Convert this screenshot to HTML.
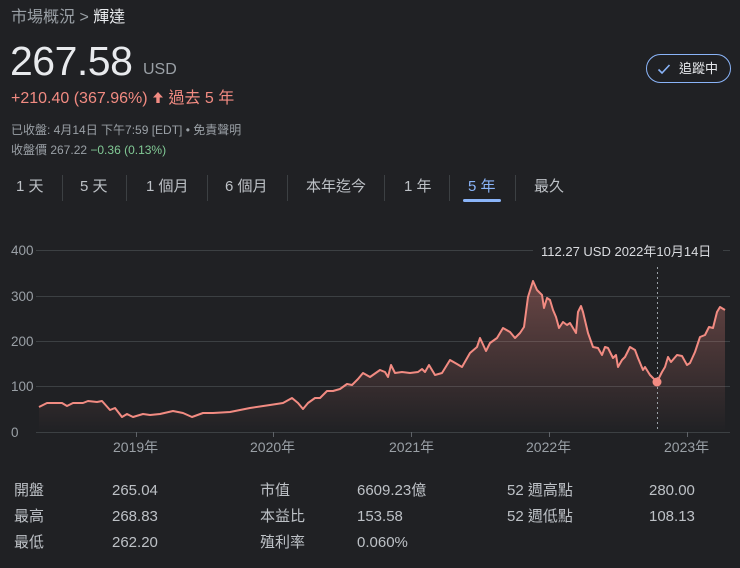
<!DOCTYPE html>
<html><head><meta charset="utf-8"><style>
body{margin:0;width:740px;height:568px;background:#202124;overflow:hidden;font-family:"Liberation Sans","Noto Sans CJK TC",sans-serif;color:#bdc1c6;position:relative}
.a{position:absolute;white-space:nowrap}
.tab{position:absolute;top:177px;font-size:15px;line-height:20px;color:#bdc1c6}
.sep{position:absolute;top:175px;width:1px;height:26px;background:#3c4043}
.k{position:absolute;font-size:15px;line-height:20px;color:#bdc1c6}
</style></head><body>
<div class="a" style="left:11px;top:7px;font-size:16px;line-height:22px;color:#9aa0a6">市場概況 &gt; <span style="color:#e8eaed">輝達</span></div>
<div class="a" style="left:10px;top:38px;font-size:41px;line-height:46px;color:#e8eaed;letter-spacing:-0.5px">267.58</div>
<div class="a" style="left:143px;top:60px;font-size:16px;line-height:20px;color:#9aa0a6">USD</div>
<div class="a" style="left:11px;top:89px;font-size:16px;line-height:20px;color:#f28b82">+210.40 (367.96%) <svg width="12" height="13" viewBox="0 0 12 13" style="vertical-align:-1px"><path d="M6 1L1 6.5H4.3V12H7.7V6.5H11Z" fill="#f28b82"/></svg> 過去 5 年</div>
<div class="a" style="left:11px;top:122px;font-size:12px;line-height:16px;color:#9aa0a6">已收盤: 4月14日 下午7:59 [EDT] • 免責聲明</div>
<div class="a" style="left:11px;top:142px;font-size:12px;line-height:16px;color:#9aa0a6">收盤價 267.22 <span style="color:#81c995">−0.36 (0.13%)</span></div>
<div class="a" style="left:646px;top:54px;width:85px;height:29px;border:1px solid #8ab4f8;border-radius:15px;box-sizing:border-box">
<svg style="position:absolute;left:10px;top:8px" width="14" height="12" viewBox="0 0 14 12"><path d="M1.5 6.5L5 10L12.5 2" fill="none" stroke="#8ab4f8" stroke-width="1.6"/></svg>
<span style="position:absolute;left:32px;top:5px;font-size:13px;line-height:17px;color:#e8eaed">追蹤中</span></div>
<div class="tab" style="left:16px">1 天</div><div class="sep" style="left:62px"></div>
<div class="tab" style="left:80px">5 天</div><div class="sep" style="left:126px"></div>
<div class="tab" style="left:146px">1 個月</div><div class="sep" style="left:207px"></div>
<div class="tab" style="left:225px">6 個月</div><div class="sep" style="left:287px"></div>
<div class="tab" style="left:306px">本年迄今</div><div class="sep" style="left:384px"></div>
<div class="tab" style="left:404px">1 年</div><div class="sep" style="left:449px"></div>
<div class="tab" style="left:468px;color:#8ab4f8">5 年</div>
<div class="a" style="left:463px;top:199px;width:38px;height:3px;background:#8ab4f8;border-radius:2px"></div>
<div class="sep" style="left:515px"></div>
<div class="tab" style="left:534px">最久</div>
<svg class="a" style="left:0;top:230px" width="740" height="240" viewBox="0 230 740 240">
<defs><linearGradient id="g" x1="0" y1="280" x2="0" y2="432" gradientUnits="userSpaceOnUse"><stop offset="0" stop-color="#f28b82" stop-opacity="0.35"/><stop offset="1" stop-color="#f28b82" stop-opacity="0"/></linearGradient></defs>
<g stroke="#3c4043" stroke-width="1"><line x1="36" y1="250.5" x2="730" y2="250.5"/><line x1="36" y1="296.5" x2="730" y2="296.5"/><line x1="36" y1="341.5" x2="730" y2="341.5"/><line x1="36" y1="386.5" x2="730" y2="386.5"/><line x1="36" y1="432.5" x2="730" y2="432.5"/></g>
<g fill="#9aa0a6" font-size="13.5"><text x="11" y="255">400</text><text x="11" y="301">300</text><text x="11" y="346">200</text><text x="11" y="391">100</text><text x="11" y="437">0</text></g>
<g fill="#9aa0a6" font-size="14"><text x="113" y="452">2019年</text><text x="250" y="452">2020年</text><text x="389" y="452">2021年</text><text x="526" y="452">2022年</text><text x="664" y="452">2023年</text></g>
<g stroke="#5f6368"><line x1="136.5" y1="432" x2="136.5" y2="437"/><line x1="273.5" y1="432" x2="273.5" y2="437"/><line x1="411.5" y1="432" x2="411.5" y2="437"/><line x1="549.5" y1="432" x2="549.5" y2="437"/><line x1="687.5" y1="432" x2="687.5" y2="437"/></g>
<path d="M39 407L47 403L55 403L62 403L67 406L73 403L83 403L88 401L97 402L102 401L110 410L115 408L122 417L127 414L133 417L143 414L150 415L160 414L173 411L183 413L192 417L203 413L213 413L230 412L250 408L270 405L283 403L292 398L298 403L303 409L308 403L315 398L320 398L327 391L333 391L340 389L347 384L352 385L358 379L363 373L370 377L380 370L385 372L388 377L391 365L395 373L402 372L410 373L418 372L422 369L425 372L429 365L435 375L442 373L450 360L457 364L462 367L470 353L477 347L480 338L486 351L490 343L497 338L503 328L510 332L515 338L520 333L524 327L528 297L533 281L537 290L542 295L544 308L547 298L550 300L553 310L556 317L559 328L563 322L567 325L570 323L576 333L578 312L581 306L583 312L588 333L593 347L598 348L602 355L605 347L608 348L613 358L616 355L618 367L622 360L625 357L630 347L635 350L638 358L643 370L645 367L650 375L657 382L662 372L665 367L668 357L671 362L677 355L682 356L687 365L690 363L695 352L700 337L705 335L709 327L713 328L717 312L720 307L725 310L725 432L39 432Z" fill="url(#g)"/>
<path d="M39 407L47 403L55 403L62 403L67 406L73 403L83 403L88 401L97 402L102 401L110 410L115 408L122 417L127 414L133 417L143 414L150 415L160 414L173 411L183 413L192 417L203 413L213 413L230 412L250 408L270 405L283 403L292 398L298 403L303 409L308 403L315 398L320 398L327 391L333 391L340 389L347 384L352 385L358 379L363 373L370 377L380 370L385 372L388 377L391 365L395 373L402 372L410 373L418 372L422 369L425 372L429 365L435 375L442 373L450 360L457 364L462 367L470 353L477 347L480 338L486 351L490 343L497 338L503 328L510 332L515 338L520 333L524 327L528 297L533 281L537 290L542 295L544 308L547 298L550 300L553 310L556 317L559 328L563 322L567 325L570 323L576 333L578 312L581 306L583 312L588 333L593 347L598 348L602 355L605 347L608 348L613 358L616 355L618 367L622 360L625 357L630 347L635 350L638 358L643 370L645 367L650 375L657 382L662 372L665 367L668 357L671 362L677 355L682 356L687 365L690 363L695 352L700 337L705 335L709 327L713 328L717 312L720 307L725 310" fill="none" stroke="#f28b82" stroke-width="2" stroke-linejoin="round"/>
<line x1="657.5" y1="267" x2="657.5" y2="432" stroke="#9aa0a6" stroke-dasharray="2,3"/>
<circle cx="657" cy="382" r="4.5" fill="#f28b82"/>
<rect x="533" y="238" width="190" height="28" fill="#202124"/>
<text x="541" y="256" font-size="13" fill="#dadce0">112.27 USD  2022年10月14日</text>
</svg>
<div class="k" style="left:14px;top:481px">開盤</div><div class="k" style="left:112px;top:481px">265.04</div>
<div class="k" style="left:260px;top:481px">市值</div><div class="k" style="left:357px;top:481px">6609.23億</div>
<div class="k" style="left:507px;top:481px">52 週高點</div><div class="k" style="left:649px;top:481px">280.00</div>
<div class="k" style="left:14px;top:507px">最高</div><div class="k" style="left:112px;top:507px">268.83</div>
<div class="k" style="left:260px;top:507px">本益比</div><div class="k" style="left:357px;top:507px">153.58</div>
<div class="k" style="left:507px;top:507px">52 週低點</div><div class="k" style="left:649px;top:507px">108.13</div>
<div class="k" style="left:14px;top:533px">最低</div><div class="k" style="left:112px;top:533px">262.20</div>
<div class="k" style="left:260px;top:533px">殖利率</div><div class="k" style="left:357px;top:533px">0.060%</div>
</body></html>
